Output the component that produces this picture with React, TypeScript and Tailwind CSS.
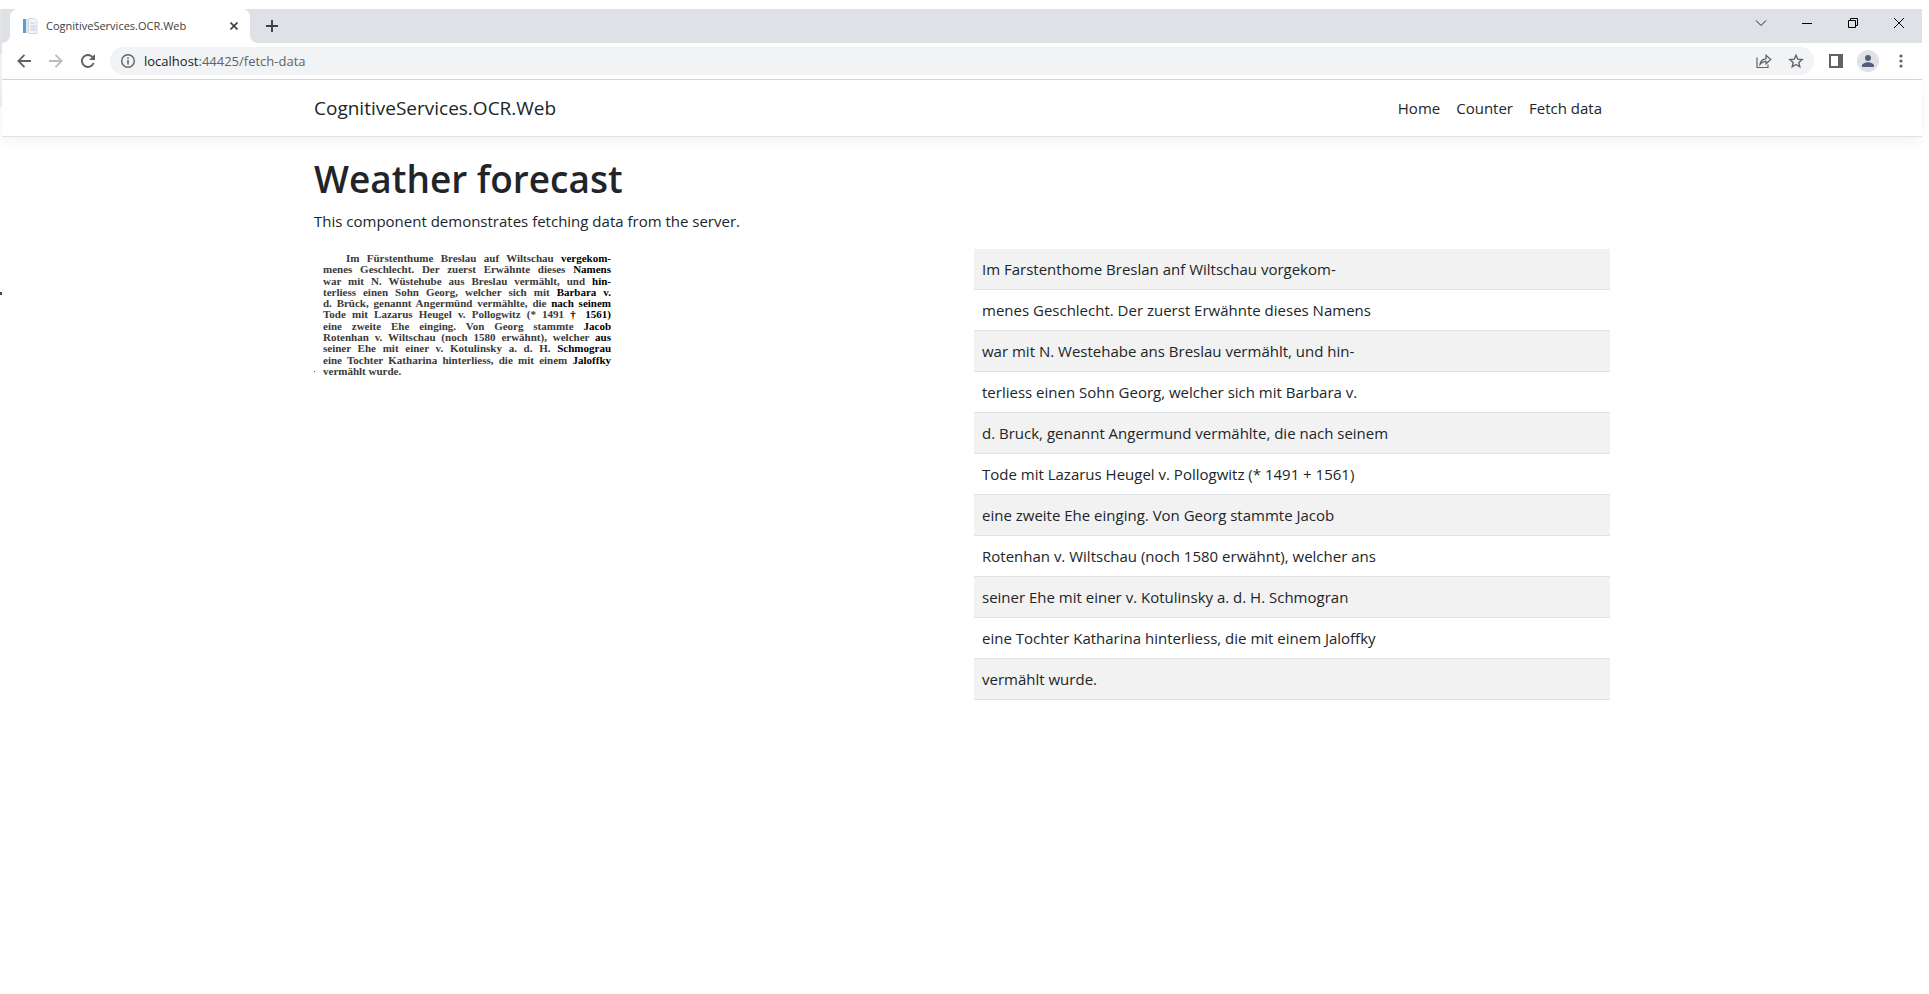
import React from "react";

const ocrLines = [
  "Im Farstenthome Breslan anf Wiltschau vorgekom-",
  "menes Geschlecht. Der zuerst Erwähnte dieses Namens",
  "war mit N. Westehabe ans Breslau vermählt, und hin-",
  "terliess einen Sohn Georg, welcher sich mit Barbara v.",
  "d. Bruck, genannt Angermund vermählte, die nach seinem",
  "Tode mit Lazarus Heugel v. Pollogwitz (* 1491 + 1561)",
  "eine zweite Ehe einging. Von Georg stammte Jacob",
  "Rotenhan v. Wiltschau (noch 1580 erwähnt), welcher ans",
  "seiner Ehe mit einer v. Kotulinsky a. d. H. Schmogran",
  "eine Tochter Katharina hinterliess, die mit einem Jaloffky",
  "vermählt wurde.",
];

// Each scanned line is split where the print turns darker.
const scanLines: { text: string; dark: string }[] = [
  { text: "Im Fürstenthume Breslau auf Wiltschau", dark: "vergekom-" },
  { text: "menes Geschlecht. Der zuerst Erwähnte dieses", dark: "Namens" },
  { text: "war mit N. Wüstehube aus Breslau vermählt, und", dark: "hin-" },
  { text: "terliess einen Sohn Georg, welcher sich mit", dark: "Barbara v." },
  { text: "d. Brück, genannt Angermünd vermählte, die", dark: "nach seinem" },
  { text: "Tode mit Lazarus Heugel v. Pollogwitz (* 1491", dark: "† 1561)" },
  { text: "eine zweite Ehe einging. Von Georg stammte", dark: "Jacob" },
  { text: "Rotenhan v. Wiltschau (noch 1580 erwähnt), welcher", dark: "aus" },
  { text: "seiner Ehe mit einer v. Kotulinsky a. d. H.", dark: "Schmograu" },
  { text: "eine Tochter Katharina hinterliess, die mit einem", dark: "Jaloffky" },
];

function TabStrip() {
  return (
    <div className="flex h-[34px] items-stretch bg-white">
      <div className="w-2 rounded-br-lg bg-[#dee1e6]" />
      <div className="flex w-60 bg-[#dee1e6]">
        <div className="flex grow items-center rounded-t-lg bg-white pr-2 pl-3">
          <svg width="16" height="16" viewBox="0 0 16 16" aria-hidden="true">
            <path d="M1 1h3v14H1z" fill="#5b9fd0" />
            <path d="M4 1h2v14H4z" fill="#dbe7f2" />
            <path d="M6.500 .5h6l2.500 2.500v12.500h-8.500z" fill="#f3f5f8" stroke="#d3d8de" />
            <path d="M8 5h5M8 8h6M8 12.500h6" stroke="#c9cfd7" />
            <path d="M8.500 8.500h5v4h-5z" fill="#dfe3e9" />
          </svg>
          <span className="ml-2 grow text-[11px] leading-4 text-[#3c4043]">CognitiveServices.OCR.Web</span>
          <button aria-label="Close tab" className="flex size-4 items-center justify-center">
            <svg width="8" height="8" viewBox="0 0 8 8">
              <path d="M.5 .5l7 7M7.500 .5l-7 7" stroke="#3c4043" strokeWidth="1.600" />
            </svg>
          </button>
        </div>
      </div>
      <div className="flex grow rounded-bl-lg bg-[#dee1e6]">
        <button aria-label="New tab" className="ml-[14px] flex w-4 items-center justify-center">
          <svg width="12" height="12" viewBox="0 0 12 12">
            <path d="M6 0v12M0 6h12" stroke="#3c4043" strokeWidth="1.900" />
          </svg>
        </button>
        <div className="ml-auto flex h-7 items-center">
          <button aria-label="Search tabs" className="flex h-7 w-[46px] items-center justify-center">
            <svg width="12" height="12" viewBox="0 0 12 12" fill="none">
              <path d="M1 3.500l5 5 5-5" stroke="#222" />
            </svg>
          </button>
          <button aria-label="Minimize" className="flex h-7 w-[46px] items-center justify-center">
            <svg width="10" height="10" viewBox="0 0 10 10">
              <path d="M0 5.500h10" stroke="#000" />
            </svg>
          </button>
          <button aria-label="Restore" className="flex h-7 w-[46px] items-center justify-center">
            <svg width="10" height="10" viewBox="0 0 10 10" fill="none">
              <path d="M.5 2.500h7v7h-7zM2.500 2.500v-2h7v7h-2" stroke="#000" />
            </svg>
          </button>
          <button aria-label="Close" className="flex h-7 w-[46px] items-center justify-center">
            <svg width="10" height="10" viewBox="0 0 10 10">
              <path d="M0 0l10 10M10 0L0 10" stroke="#000" />
            </svg>
          </button>
        </div>
      </div>
    </div>
  );
}

function Toolbar() {
  return (
    <div className="flex h-[37px] items-center border-b border-[#d5d7da] bg-white pr-[19px] pl-[13px]">
      <button aria-label="Back" className="flex w-[18px] justify-center">
        <svg width="14" height="14" viewBox="0 0 14 14" fill="none" stroke="#5f6368" strokeWidth="1.800">
          <path d="M14 7H1.500M7.500 .8L1.300 7l6.200 6.200" />
        </svg>
      </button>
      <button aria-label="Forward" className="ml-[14px] flex w-[18px] justify-center">
        <svg width="14" height="14" viewBox="0 0 14 14" fill="none" stroke="#babcbe" strokeWidth="1.800">
          <path d="M0 7h12.500M6.500 .8L12.700 7l-6.200 6.200" />
        </svg>
      </button>
      <button aria-label="Reload" className="ml-[14px] flex w-[18px] justify-center">
        <svg width="14" height="14" viewBox="0 0 14 14">
          <path d="M12.600 9A6 6 0 1 1 11.500 3" fill="none" stroke="#5f6368" strokeWidth="1.900" />
          <path d="M14 0v6H8z" fill="#5f6368" />
        </svg>
      </button>
      <div className="ml-[13px] flex h-7 grow items-center rounded-full bg-[#f1f3f4] pr-[10px] pl-[11px]">
        <svg width="14" height="14" viewBox="0 0 14 14" aria-hidden="true">
          <circle cx="7" cy="7" r="6.300" fill="none" stroke="#5f6368" strokeWidth="1.400" />
          <path d="M6.200 6h1.600v4.500H6.200zM6.200 3.400h1.600V5H6.200z" fill="#5f6368" />
        </svg>
        <a href="#address" className="ml-[9px] text-[13px] leading-5 text-[#5f6368]">
          <span className="text-[#202124]">localhost</span>:44425/fetch-data
        </a>
        <button aria-label="Share this page" className="ml-auto flex w-4 justify-center">
          <svg width="16" height="14" viewBox="0 0 16 14" fill="none" stroke="#5f6368" strokeWidth="1.200">
            <path d="M1 3.500v10h11v-3" />
            <path d="M4 10.500c.3-3.500 2.300-5.500 6-5.700V1.200l4.800 4.300L10 9.800V7.400c-2.700 0-4.500 1-6 3.100z" />
          </svg>
        </button>
        <button aria-label="Bookmark this tab" className="ml-4 flex w-4 justify-center">
          <svg width="16" height="16" viewBox="0 0 16 16" fill="none" stroke="#5f6368" strokeWidth="1.400">
            <path d="M8 2.200l1.700 4 4.400.4-3.300 2.900 1 4.300L8 11.500l-3.800 2.300 1-4.300-3.300-2.900 4.400-.4z" />
          </svg>
        </button>
      </div>
      <button aria-label="Side panel" className="ml-[15px] flex">
        <svg width="14" height="14" viewBox="0 0 14 14">
          <path d="M0 0h14v14H0zM2 2v10h7V2z" fill="#5f6368" fillRule="evenodd" />
        </svg>
      </button>
      <button aria-label="Profile" className="ml-[14px] flex">
        <svg width="22" height="22" viewBox="0 0 22 22">
          <circle cx="11" cy="11" r="11" fill="#dee1e6" />
          <circle cx="11" cy="8" r="3" fill="#545d73" />
          <path d="M5 17v-1.500c0-2 3.500-3.300 6-3.300s6 1.300 6 3.300V17z" fill="#545d73" />
        </svg>
      </button>
      <button aria-label="Menu" className="ml-5 flex">
        <svg width="4" height="14" viewBox="0 0 4 14" fill="#5f6368">
          <circle cx="2" cy="2" r="1.600" />
          <circle cx="2" cy="7" r="1.600" />
          <circle cx="2" cy="12" r="1.600" />
        </svg>
      </button>
    </div>
  );
}

function NavBar() {
  return (
    <header className="border-b border-[#dee2e6] shadow-[0_4px_12px_rgba(0,0,0,0.05)]">
      <div className="mx-auto flex h-14 max-w-[1320px] items-center justify-between px-3">
        <a href="#home" className="text-[19px] leading-[30px]">CognitiveServices.OCR.Web</a>
        <nav className="flex gap-4 pr-2 text-[15px] leading-6">
          <a href="#home">Home</a>
          <a href="#counter">Counter</a>
          <a href="#fetch-data">Fetch data</a>
        </nav>
      </div>
    </header>
  );
}

function ScannedText() {
  return (
    <figure
      aria-label="Scanned text"
      className="flex h-[132px] w-[300px] flex-col justify-between py-1 pr-[3px] font-['Liberation_Serif',serif] text-[11px] leading-[11px] font-bold text-[#3a3a3a]"
    >
      {scanLines.map((line, i) => (
        <p
          key={line.text}
          className={
            i === 0
              ? "pl-8 whitespace-nowrap [text-align-last:justify]"
              : "pl-[9px] whitespace-nowrap [text-align-last:justify]"
          }
        >
          {line.text} <span className="text-black">{line.dark}</span>
        </p>
      ))}
      <p className="flex items-center gap-2 whitespace-nowrap">
        <span className="size-px bg-[#555]" />
        vermählt wurde.
      </p>
    </figure>
  );
}

// Sliver of the desktop that shows beside the browser window.
function WindowEdge() {
  return (
    <div className="w-[2px] shrink-0">
      <div className="h-[45px] bg-[#e4e4e4]" />
      <div className="h-[53px] bg-[#f1f1f1]" />
      <div className="mt-[185px] h-[3px] bg-[#444]" />
    </div>
  );
}

export default function App() {
  return (
    <div className="flex min-h-screen bg-white pt-[9px] pr-[7px] font-['Open_Sans','Noto_Sans',sans-serif] text-[#212529]">
      <WindowEdge />
      <div className="grow">
        <TabStrip />
        <Toolbar />
        <NavBar />
        <main className="mx-auto mt-[18px] max-w-[1320px] px-3">
          <h1 className="mb-1.5 text-[37px] leading-[48px] font-semibold">Weather forecast</h1>
          <p className="mb-4 text-[15px] leading-6">This component demonstrates fetching data from the server.</p>
          <div className="grid grid-cols-2 gap-6">
            <ScannedText />
            <table className="w-full self-start border-collapse text-[15px] leading-6">
              <tbody>
                {ocrLines.map((line) => (
                  <tr key={line} className="border-b border-[#dee2e6] odd:bg-[#f2f2f2]">
                    <td className="p-2">{line}</td>
                  </tr>
                ))}
              </tbody>
            </table>
          </div>
        </main>
      </div>
    </div>
  );
}
